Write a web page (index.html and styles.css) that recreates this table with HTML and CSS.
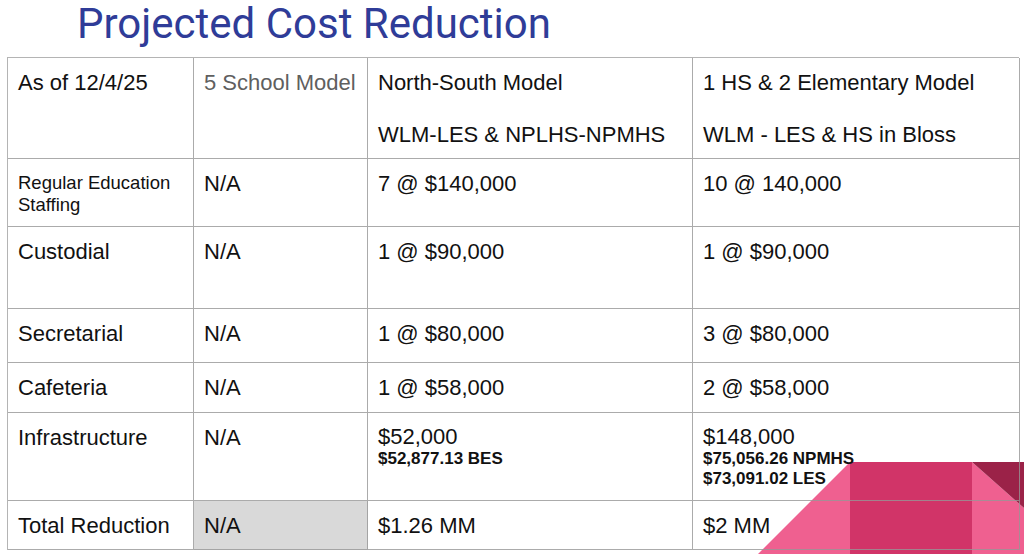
FILE: index.html
```html
<!DOCTYPE html>
<html lang="en">
<head>
<meta charset="utf-8">
<title>Projected Cost Reduction</title>
<link rel="stylesheet" href="styles.css">
</head>
<body>
<div class="slide">
  <svg class="decor" width="1024" height="554" viewBox="0 0 1024 554" aria-hidden="true">
    <polygon points="758,554 850,462 972,462 1024,508 1024,554" fill="#ef6090"/>
    <rect x="850" y="462" width="122" height="92" fill="#d13468"/>
    <polygon points="972,462 1024,462 1024,508" fill="#9b2248"/>
  </svg>
  <h1 class="title">Projected Cost Reduction</h1>
  <div class="grid">
    <div class="cell">As of 12/4/25</div>
    <div class="cell muted">5 School Model</div>
    <div class="cell"><p>North-South Model</p><p>WLM-LES &amp; NPLHS-NPMHS</p></div>
    <div class="cell"><p>1 HS &amp; 2 Elementary Model</p><p>WLM - LES &amp; HS in Bloss</p></div>

    <div class="cell small">Regular Education Staffing</div>
    <div class="cell">N/A</div>
    <div class="cell">7 @ $140,000</div>
    <div class="cell">10 @ 140,000</div>

    <div class="cell">Custodial</div>
    <div class="cell">N/A</div>
    <div class="cell">1 @ $90,000</div>
    <div class="cell">1 @ $90,000</div>

    <div class="cell">Secretarial</div>
    <div class="cell">N/A</div>
    <div class="cell">1 @ $80,000</div>
    <div class="cell">3 @ $80,000</div>

    <div class="cell">Cafeteria</div>
    <div class="cell">N/A</div>
    <div class="cell">1 @ $58,000</div>
    <div class="cell">2 @ $58,000</div>

    <div class="cell">Infrastructure</div>
    <div class="cell">N/A</div>
    <div class="cell stack"><span class="big">$52,000</span><span class="note">$52,877.13 BES</span></div>
    <div class="cell stack"><span class="big">$148,000</span><span class="note">$75,056.26 NPMHS</span><span class="note">$73,091.02 LES</span></div>

    <div class="cell">Total Reduction</div>
    <div class="cell shaded">N/A</div>
    <div class="cell">$1.26 MM</div>
    <div class="cell">$2 MM</div>
  </div>
</div>
</body>
</html>
```
FILE: styles.css
```css
html, body {
  margin: 0;
  padding: 0;
  background: #ffffff;
}
.slide {
  position: relative;
  width: 1024px;
  height: 554px;
  overflow: hidden;
  font-family: "Liberation Sans", Arial, sans-serif;
  color: #111;
}
.decor {
  position: absolute;
  left: 0;
  top: 0;
  z-index: 0;
}
.title {
  position: relative;
  z-index: 1;
  margin: 0 0 9px 77px;
  font-family: Roboto, "Noto Sans", sans-serif;
  font-weight: 400;
  font-size: 42px;
  line-height: 48px;
  color: #2f3c98;
}
.grid {
  position: relative;
  z-index: 1;
  margin-left: 7px;
  width: 1012px;
  display: grid;
  grid-template-columns: 186px 174px 325px 327px;
  grid-template-rows: 101px 68px 82px 54px 50px 88px 49px;
  border-left: 1px solid #b4b4b4;
  border-top: 1px solid #b4b4b4;
  box-sizing: border-box;
}
.cell {
  box-sizing: border-box;
  border-right: 1px solid rgba(150,150,150,0.8);
  border-bottom: 1px solid rgba(150,150,150,0.8);
  padding: 12px 10px 0 10px;
  font-size: 22px;
  line-height: 26px;
}
.cell p {
  margin: 0 0 26px 0;
}
.muted {
  color: #5f5f5f;
}
.small {
  font-size: 18.5px;
  line-height: 22px;
  padding-top: 13px;
}
.shaded {
  background: #d9d9d9;
}
.stack {
  display: flex;
  flex-direction: column;
}
.big {
  line-height: 24px;
}
.note {
  font-size: 17px;
  font-weight: 700;
  line-height: 20px;
}
```
